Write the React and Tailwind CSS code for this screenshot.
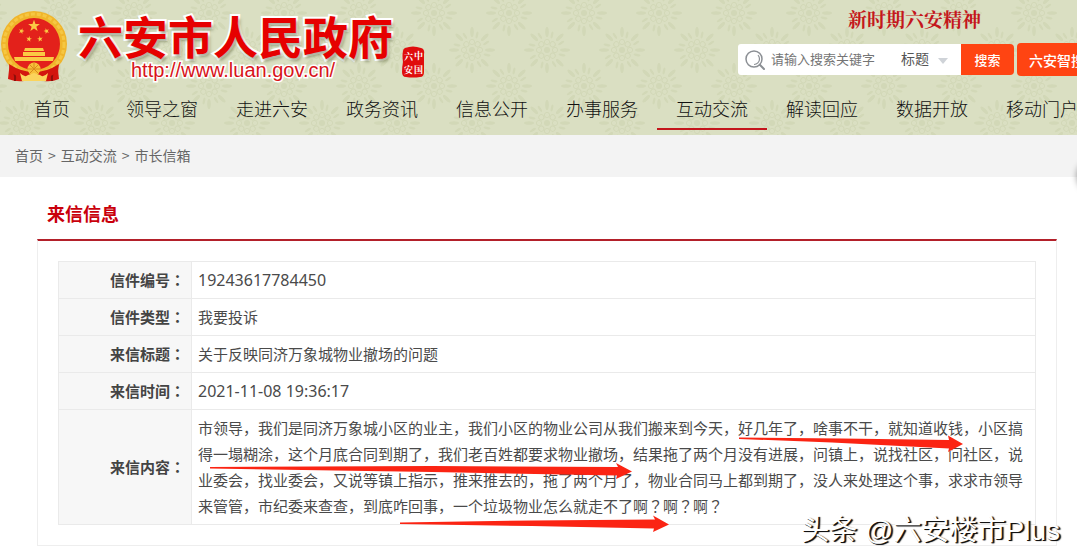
const navItems = [
  '首页',
  '领导之窗',
  '走进六安',
  '政务资讯',
  '信息公开',
  '办事服务',
  '互动交流',
  '解读回应',
  '数据开放',
  '移动门户',
];

const letterRows = [
  { label: '信件编号', value: '19243617784450', numeric: true },
  { label: '信件类型', value: '我要投诉' },
  { label: '来信标题', value: '关于反映同济万象城物业撤场的问题' },
  { label: '来信时间', value: '2021-11-08 19:36:17', numeric: true },
];

const letterContent =
  '市领导，我们是同济万象城小区的业主，我们小区的物业公司从我们搬来到今天，好几年了，啥事不干，就知道收钱，小区搞得一塌糊涂，这个月底合同到期了，我们老百姓都要求物业撤场，结果拖了两个月没有进展，问镇上，说找社区，问社区，说业委会，找业委会，又说等镇上指示，推来推去的，拖了两个月了，物业合同马上都到期了，没人来处理这个事，求求市领导来管管，市纪委来查查，到底咋回事，一个垃圾物业怎么就走不了';

const angles = [0, 45, 90, 135, 180, 225, 270, 315];

const Flower = ({ x, y }) => (
  <g transform={`translate(${x} ${y})`}>
    {angles.map((a) => (
      <g key={a} transform={`rotate(${a})`}>
        <ellipse cx="0" cy="-18" rx="1.8" ry="5" />
        <ellipse cx="5" cy="-15" rx="1.2" ry="3.5" transform="rotate(12 5 -15)" />
        <circle cx="0" cy="-8" r="2.6" fill="none" stroke="#cfd5b3" strokeWidth="1" />
      </g>
    ))}
    <circle r="3" />
  </g>
);

const HeaderPattern = () => (
  <svg className="absolute inset-0 h-full w-full" aria-hidden="true">
    <defs>
      <pattern id="flowers" x="22" y="-23" width="75" height="73" patternUnits="userSpaceOnUse">
        <g fill="#cfd5b3">
          <Flower x={37} y={36} />
          <Flower x={0} y={0} />
          <Flower x={75} y={0} />
          <Flower x={0} y={73} />
          <Flower x={75} y={73} />
        </g>
      </pattern>
    </defs>
    <rect width="100%" height="100%" fill="url(#flowers)" opacity="0.75" />
  </svg>
);

const STAR = 'M0-10 2.4-3.1 9.5-3.1 3.8 1.2 5.9 8.1 0 4-5.9 8.1-3.8 1.2-9.5-3.1-2.4-3.1Z';

const Emblem = () => (
  <svg className="h-[72px] w-[68px] shrink-0" viewBox="0 0 68 72" aria-label="国徽">
    <path d="M10 50 8 68q8 3 16 2l10-3 10 3q8 1 15-2l-2-18Z" fill="#d3160f" />
    <path d="M11 56q5 6 4 14M56 56q-5 6-4 14" stroke="#8e0f0b" strokeWidth="2" fill="none" />
    <circle cx="34" cy="33" r="33" fill="#f0b52b" />
    <circle cx="34" cy="33" r="30" fill="none" stroke="#f6c742" strokeWidth="3" strokeDasharray="4 2" />
    <circle cx="34" cy="33" r="26" fill="#e3211b" />
    <g fill="#fbc944">
      <path d={STAR} transform="translate(34 15) scale(.62)" />
      <path d={STAR} transform="translate(21.5 20) rotate(20) scale(.3)" />
      <path d={STAR} transform="translate(46.5 20) rotate(-20) scale(.3)" />
      <path d={STAR} transform="translate(29 28) rotate(10) scale(.3)" />
      <path d={STAR} transform="translate(40 28) rotate(-10) scale(.3)" />
      <path d="M25 37h18l1 3H24ZM23 41h22v4H23ZM14 46h40l-1 4H15Z" />
    </g>
    <path d="M9 53q12 8 25 8t25-8l-1 8q-10 7-24 7T10 61Z" fill="#d3160f" />
    <circle cx="34" cy="58" r="6.5" fill="#f7c13a" />
    <path
      d="M34 58v-7M34 58l-5-5M34 58l5-5M34 58h-7M34 58h7M34 58l-5 5M34 58l5 5"
      stroke="#d98b1c"
      strokeWidth="1"
    />
    <path d="M20 62q5 5 8 2l6-2 6 2q3 3 8-2l-2 8H22Z" fill="#fbd45c" />
  </svg>
);

const Seal = () => (
  <svg className="h-8 w-6 shrink-0" viewBox="0 0 24 32" aria-hidden="true">
    <path
      d="M4 2q8-3 16 0q4 1 3 6v18q0 5-4 5-7 1-14 0-4 0-4-5 0-5 1-10Q1 10 2 5q0-2 2-3Z"
      fill="#e00d0d"
    />
    <g fill="#fff" fontSize="9" fontWeight="700" fontFamily='"Noto Serif CJK SC", "Noto Sans CJK SC", serif'>
      <text x="13" y="13">中</text>
      <text x="13" y="27">国</text>
      <text x="3" y="14">六</text>
      <text x="3" y="27">安</text>
    </g>
  </svg>
);

const SearchIcon = () => (
  <svg className="h-5 w-5 shrink-0" viewBox="0 0 20 20" fill="none" stroke="#8b8f94" aria-hidden="true">
    <circle cx="9" cy="9" r="8" strokeWidth="1.5" />
    <path d="M9 14.5A5.5 5.5 0 0 0 14.5 9 5.5 5.5 0 0 0 13 5.2" strokeWidth="1.2" />
    <path d="m14.8 14.8 4.2 4.2" strokeWidth="2" strokeLinecap="round" />
  </svg>
);

const SearchBar = () => (
  <form className="flex items-center" onSubmit={(e) => e.preventDefault()}>
    <div className="flex h-[31px] w-[223px] items-center rounded-l-[3px] bg-white pl-[7px]">
      <SearchIcon />
      <input
        type="text"
        aria-label="搜索关键字"
        placeholder="请输入搜索关键字"
        className="ml-[6px] h-[31px] w-[130px] pb-[2px] text-[13px] placeholder:text-[#757575] focus:outline-none"
      />
      <div className="relative">
        <select
          aria-label="搜索范围"
          className="h-[31px] w-[50px] appearance-none pb-[3px] text-sm text-[#555] focus:outline-none"
        >
          <option>标题</option>
          <option>内容</option>
        </select>
        <svg
          className="pointer-events-none absolute top-[14px] right-[3px] h-[6px] w-[10px]"
          viewBox="0 0 10 6"
          aria-hidden="true"
        >
          <path d="M0 0h10L5 6Z" fill="#cfd3d8" />
        </svg>
      </div>
    </div>
    <button type="submit" className="h-[31px] w-[53px] rounded-r-[4px] bg-[#ff4412] text-[13px] font-medium text-white">
      搜索
    </button>
    <button type="button" className="ml-[3px] h-[33px] w-20 rounded-[4px] bg-[#ff4412] text-sm font-medium text-white">
      六安智搜
    </button>
  </form>
);

const Header = () => (
  <header className="relative overflow-hidden bg-[#dadfc2]">
    <HeaderPattern />
    <div className="relative flex h-[84px] items-start justify-between">
      <a href="#home" className="flex items-start pt-[11px]">
        <Emblem />
        <div className="ml-[10px] pt-[3px] whitespace-nowrap">
          <h1 className="text-[45px] leading-[44px] font-bold text-[#e60000] [paint-order:stroke_fill] [-webkit-text-stroke:4px_#fff] [text-shadow:2px_3px_3px_rgba(90,100,60,0.5)]">
            六安市人民政府
          </h1>
          <p className="pt-[2px] pl-[53px] font-['Liberation_Sans',sans-serif] text-[20px] leading-[20px] text-[#d8141a] [paint-order:stroke_fill] [-webkit-text-stroke:3px_#fff]">
            http://www.luan.gov.cn/
          </p>
        </div>
        <div className="mt-[35px] ml-[8px]">
          <Seal />
        </div>
      </a>
      <div className="-mr-5 shrink-0">
        <p className="pt-[5px] pb-[10px] pl-[110px] font-['Noto_Serif_CJK_SC','Noto_Sans_CJK_SC',serif] text-[19px] leading-7 font-bold text-[#c4161c]">
          新时期六安精神
        </p>
        <SearchBar />
      </div>
    </div>
    <nav className="relative pb-[5px]">
      <ul className="-ml-[3px] flex">
        {navItems.map((item) => (
          <li key={item} className="w-[110px] shrink-0">
            <a
              href={`#${item}`}
              className={
                item === '互动交流'
                  ? 'block h-[46px] border-b-2 border-[#c4161c] text-center text-lg leading-[48px] font-light text-[#111]'
                  : 'block h-[46px] text-center text-lg leading-[48px] font-light text-[#111]'
              }
            >
              {item}
            </a>
          </li>
        ))}
      </ul>
    </nav>
  </header>
);

const Breadcrumb = () => (
  <div className="flex gap-[5px] bg-[#f3f3f3] px-[15px] pb-[2px] text-sm leading-10 text-[#666]">
    <a href="#home">首页</a>
    <span>&gt;</span>
    <a href="#exchange">互动交流</a>
    <span>&gt;</span>
    <a href="#mailbox">市长信箱</a>
  </div>
);

// 批注箭头
const Arrows = () => (
  <svg
    className="pointer-events-none absolute top-0 left-0 h-[114px] w-[843px] overflow-visible"
    viewBox="0 0 843 114"
    fill="#fb2413"
    aria-hidden="true"
  >
    <path d="M547 27.5 650 28.5 757 30 756 25.5 771 34 756 42 757 38.5 640 32.5 547 29Z" />
    <path d="M18 57 240 56 426 57 424 53 440 61.5 424 69 425 65.5 240 62 18 58.5Z" />
    <path d="M208 112.5 340 110.5 463 109.5 461 105.5 477 114.5 461 122 462 118.5 340 116 208 114Z" />
  </svg>
);

const RowLabel = ({ children }) => (
  <th
    scope="row"
    className="w-[133px] border border-[#eaeaea] bg-[#f7f7f7] py-[5px] pr-[6px] text-right font-['Noto_Sans_CJK_JP',sans-serif] font-bold text-[#444]"
  >
    <span className="font-['Noto_Sans_CJK_SC',sans-serif]">{children}</span>：
  </th>
);

const LetterTable = () => (
  <table className="w-full border-collapse text-[15px] leading-[26px] text-[#4a4a4a]">
    <tbody>
      {letterRows.map((row) => (
        <tr key={row.label}>
          <RowLabel>{row.label}</RowLabel>
          <td
            className={
              row.numeric
                ? "border border-[#eaeaea] px-[6px] py-[5px] font-['Noto_Sans',sans-serif] text-base leading-[26px]"
                : 'border border-[#eaeaea] px-[6px] py-[5px]'
            }
          >
            {row.value}
          </td>
        </tr>
      ))}
      <tr>
        <RowLabel>来信内容</RowLabel>
        <td className="relative border border-[#eaeaea] px-[6px] py-[5px]">
          {letterContent}
          <span className="font-['Noto_Sans_CJK_JP',sans-serif]">啊？啊？啊？</span>
          <Arrows />
        </td>
      </tr>
    </tbody>
  </table>
);

export default function App() {
  return (
    <div className="relative min-h-screen overflow-hidden bg-white font-['Noto_Sans_CJK_SC',sans-serif]">
      <Header />
      <Breadcrumb />
      <main className="mr-5 ml-[37px]">
        <h2 className="pt-[17px] pb-[7px] pl-[10px] text-lg leading-[38px] font-bold text-[#c9000b]">来信信息</h2>
        <section className="border border-t-2 border-[#eee] border-t-[#b3202a] p-5">
          <LetterTable />
        </section>
      </main>
      <div className="absolute top-[160px] -right-[32px] size-8 rounded-full bg-[#eee] shadow-[0_0_6px_rgba(0,0,0,0.4)]" />
      <p className="absolute right-[17px] bottom-[9px] font-['Liberation_Sans','Noto_Sans_CJK_SC',sans-serif] text-[28px] leading-[40px] text-white [text-shadow:1px_1px_0_#111,2px_1px_1px_#111]">
        头条 @六安楼市Plus
      </p>
    </div>
  );
}
